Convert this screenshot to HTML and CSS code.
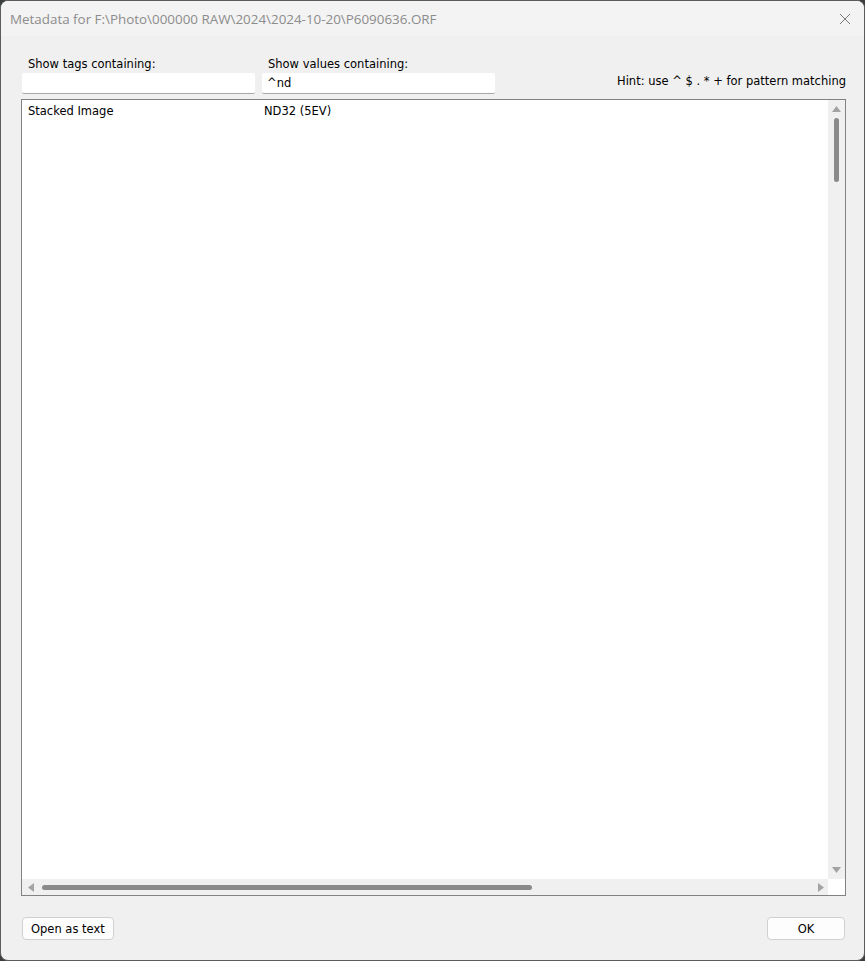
FILE: index.html
```html
<!doctype html>
<html lang="en">
  <head>
    <meta charset="UTF-8" />
    <title>Metadata</title>
    <link rel="stylesheet" href="styles.css">
  </head>
  <body>
    <div class="window">
      <div class="titlebar">
        <span class="title">Metadata for F:\Photo\000000 RAW\2024\2024-10-20\P6090636.ORF</span>
        <svg class="close" width="12" height="12" viewBox="0 0 12 12">
          <path d="M1 1 L11 11 M11 1 L1 11" stroke="#7a7a7a" stroke-width="1" fill="none" />
        </svg>
      </div>
      <div class="body">
        <div class="filters">
          <div class="filter">
            <label for="tags">Show tags containing:</label>
            <input id="tags" type="text" value="" />
          </div>
          <div class="filter">
            <label for="values">Show values containing:</label>
            <input id="values" type="text" value="^nd" />
          </div>
          <div class="hint">Hint: use ^ $ . * + for pattern matching</div>
        </div>

        <div class="listbox">
          <div class="list-main">
            <div class="rows">
              <div class="row">
                <span class="tag">Stacked Image</span>
                <span class="value">ND32 (5EV)</span>
              </div>
            </div>
            <div class="vscroll">
              <svg class="arrow" width="9" height="6" viewBox="0 0 9 6"><path d="M4.5 0 L9 6 L0 6 Z" fill="#a3a3a3" /></svg>
              <div class="vtrack"><div class="vthumb"></div></div>
              <svg class="arrow" width="9" height="6" viewBox="0 0 9 6"><path d="M0 0 L9 0 L4.5 6 Z" fill="#a3a3a3" /></svg>
            </div>
          </div>
          <div class="hscroll">
            <svg class="arrow" width="6" height="9" viewBox="0 0 6 9"><path d="M6 0 L6 9 L0 4.5 Z" fill="#a3a3a3" /></svg>
            <div class="htrack"><div class="hthumb"></div></div>
            <svg class="arrow" width="6" height="9" viewBox="0 0 6 9"><path d="M0 0 L6 4.5 L0 9 Z" fill="#a3a3a3" /></svg>
            <div class="corner"></div>
          </div>
        </div>

        <div class="buttons">
          <button>Open as text</button>
          <button class="ok">OK</button>
        </div>
      </div>
    </div>
  </body>
</html>
```

FILE: styles.css
```css
html,
body {
  margin: 0;
  height: 100%;
}
body {
  background-color: #3b3f3c;
  font-family: "DejaVu Sans", Tahoma, sans-serif;
  font-size: 11.5px;
  color: #000;
}
.window {
  box-sizing: border-box;
  height: 100%;
  display: flex;
  flex-direction: column;
  background-color: #f0f0f0;
  border: 1px solid #5c5c5c;
  border-radius: 8px;
  overflow: hidden;
}
.titlebar {
  height: 35px;
  flex: none;
  display: flex;
  align-items: center;
  justify-content: space-between;
  padding: 0 13px 0 9px;
  background-color: #f3f3f3;
}
.title {
  font-family: "Open Sans", "Noto Sans", sans-serif;
  font-size: 13.4px;
  color: #8c8c8c;
}
.body {
  flex: 1;
  display: flex;
  flex-direction: column;
  padding: 20px 18px 20px 20px;
}
.filters {
  display: flex;
  align-items: flex-end;
  gap: 7px;
  margin-bottom: 5px;
  padding-left: 1px;
}
.filter {
  display: flex;
  flex-direction: column;
  width: 233px;
}
.filter label {
  padding-left: 6px;
  margin-bottom: 1px;
  line-height: 16px;
}
.filter input {
  box-sizing: border-box;
  height: 21px;
  margin: 0;
  padding: 0 5px;
  border: none;
  border-bottom: 1px solid #a8a8a8;
  border-radius: 2px;
  background-color: #fff;
  font-family: inherit;
  font-size: 11.5px;
  outline: none;
}
.hint {
  margin-left: auto;
  padding-bottom: 5px;
  line-height: 15px;
}
.listbox {
  flex: 1;
  display: flex;
  flex-direction: column;
  border: 1px solid #828282;
  background-color: #fff;
}
.list-main {
  flex: 1;
  display: flex;
}
.rows {
  flex: 1;
  padding: 3px 0 0 6px;
}
.row {
  display: flex;
  line-height: 16px;
}
.tag {
  width: 236px;
}
.vscroll {
  width: 17px;
  display: flex;
  flex-direction: column;
  align-items: center;
  background-color: #f0f0f0;
  padding: 6px 0;
}
.vtrack {
  flex: 1;
  width: 100%;
  display: flex;
  justify-content: center;
  padding-top: 6px;
}
.vthumb {
  width: 5px;
  height: 64px;
  background-color: #8a8a8a;
  border-radius: 3px;
}
.hscroll {
  height: 16px;
  display: flex;
  align-items: center;
  background-color: #f0f0f0;
  padding-left: 6px;
}
.htrack {
  flex: 1;
  padding: 0 8px;
}
.hthumb {
  width: 490px;
  height: 5px;
  background-color: #8a8a8a;
  border-radius: 3px;
}
.corner {
  width: 17px;
  height: 16px;
  margin-left: 4px;
  background-color: #fff;
}
.buttons {
  display: flex;
  justify-content: space-between;
  margin-top: 21px;
  padding-right: 1px;
}
.buttons button {
  height: 23px;
  padding: 0 8px;
  margin-left: 1px;
  border: 1px solid #d0d0d0;
  border-radius: 4px;
  background-color: #fdfdfd;
  font-family: inherit;
  font-size: 11.5px;
  color: #000;
}
.buttons .ok {
  width: 78px;
}
```
